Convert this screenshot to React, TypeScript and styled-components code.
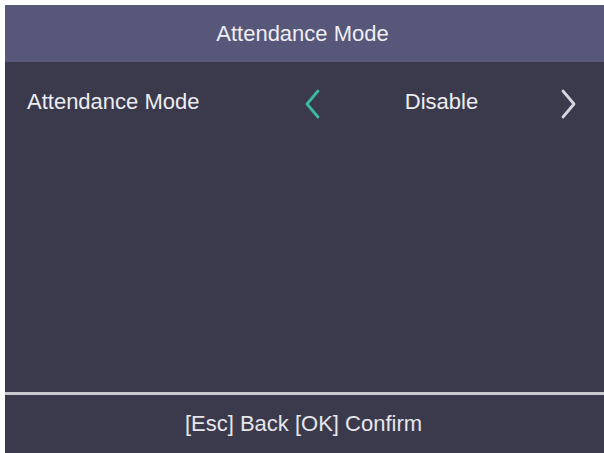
import React from "react";
import styled, { createGlobalStyle } from "styled-components";

const Global = createGlobalStyle`
  html, body { margin: 0; padding: 0; background: #ffffff; }
  body { font-family: "Liberation Sans", Arial, sans-serif; }
`;

const Screen = styled.div`
  margin: 5px 0 0 5px;
  width: 599px;
  height: 448px;
  display: flex;
  flex-direction: column;
  background: #3b3a4c;
  overflow: hidden;
`;

const Header = styled.div`
  height: 57px;
  flex: none;
  background: #57577a;
  display: flex;
  align-items: center;
  justify-content: center;
  color: #eeeef3;
  font-size: 22px;
  padding-right: 4px;
  box-sizing: border-box;
`;

const Body = styled.div`
  flex: 1;
  display: flex;
  flex-direction: column;
`;

const Row = styled.div`
  height: 80px;
  display: flex;
  align-items: center;
  padding-left: 22px;
`;

const Label = styled.div`
  width: 277px;
  color: #ececf1;
  font-size: 22px;
`;

const Selector = styled.div`
  width: 273px;
  display: flex;
  align-items: center;
`;

const Value = styled.div`
  flex: 1;
  text-align: center;
  color: #ececf1;
  font-size: 22px;
  padding-left: 2px;
`;

const Chevron = styled.svg<{ $color: string }>`
  width: 18px;
  height: 30px;
  flex: none;
  margin-top: 3px;
  polyline {
    fill: none;
    stroke: ${(p) => p.$color};
    stroke-width: 2.8;
    stroke-linecap: round;
    stroke-linejoin: round;
  }
`;

const Divider = styled.div`
  height: 3px;
  flex: none;
  background: #c9c9d2;
`;

const Footer = styled.div`
  height: 58px;
  flex: none;
  display: flex;
  align-items: center;
  justify-content: center;
  color: #e6e6ec;
  font-size: 22px;
  padding-right: 2px;
  box-sizing: border-box;
`;

export default function App() {
  return (
    <>
      <Global />
      <Screen>
        <Header>Attendance Mode</Header>
        <Body>
          <Row>
            <Label>Attendance Mode</Label>
            <Selector>
              <Chevron $color="#3db8a2" viewBox="0 0 18 30">
                <polyline points="14,2 3,15 14,28" />
              </Chevron>
              <Value>Disable</Value>
              <Chevron $color="#d6d6de" viewBox="0 0 18 30">
                <polyline points="4,2 15,15 4,28" />
              </Chevron>
            </Selector>
          </Row>
        </Body>
        <Divider />
        <Footer>[Esc] Back [OK] Confirm</Footer>
      </Screen>
    </>
  );
}
